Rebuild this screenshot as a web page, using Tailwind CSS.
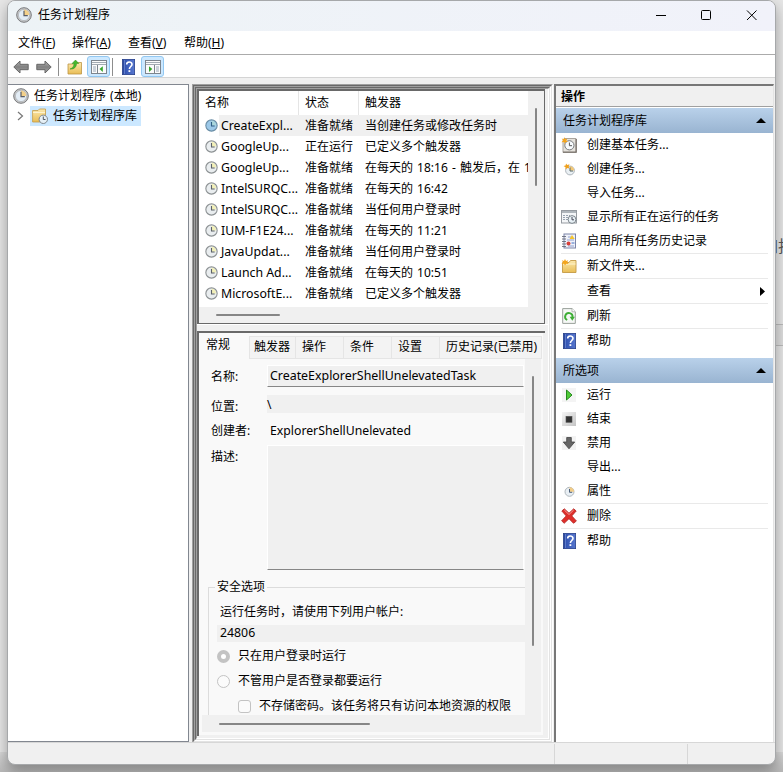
<!DOCTYPE html>
<html lang="zh-CN">
<head>
<meta charset="utf-8">
<title>任务计划程序</title>
<script src="https://cdn.jsdelivr.net/npm/@tailwindcss/browser@4"></script>
</head>
<body class="relative h-[772px] w-[783px] overflow-hidden bg-[#e6e6e6] font-['Noto_Sans','Noto_Sans_CJK_SC',sans-serif] text-[12px] leading-[16px] text-black">

<svg class="absolute size-0">
  <defs>
    <linearGradient id="gold" x1="0" y1="0" x2="0" y2="1"><stop offset="0" stop-color="#fbe9ae"/><stop offset="1" stop-color="#e9bd55"/></linearGradient>
    <linearGradient id="blue" x1="0" y1="0" x2="1" y2="0"><stop offset="0" stop-color="#2a4494"/><stop offset=".25" stop-color="#3556b4"/><stop offset="1" stop-color="#5878cf"/></linearGradient>
    <linearGradient id="grey" x1="0" y1="0" x2="0" y2="1"><stop offset="0" stop-color="#b5b5b5"/><stop offset=".5" stop-color="#808080"/><stop offset="1" stop-color="#a9a9a9"/></linearGradient>
    <linearGradient id="stopbg" x1="0" y1="0" x2="1" y2="1"><stop offset="0" stop-color="#f6f6f6"/><stop offset="1" stop-color="#c4c4c4"/></linearGradient>
    <symbol id="clock" viewBox="0 0 16 16"><circle cx="8" cy="8" r="7.300" fill="#c9c9c9" stroke="#77797c" stroke-width="1"/><circle cx="8" cy="8" r="5.600" fill="#e3edf6" stroke="#a5a8ab" stroke-width=".6"/><path d="M8 8V2.600A5.400 5.400 0 0 1 13.400 8z" fill="#f3d08a"/><path d="M8 3.800V8.600H11.800" fill="none" stroke="#5a5d65" stroke-width="1.200"/></symbol>
    <symbol id="task" viewBox="0 0 14 14"><circle cx="7" cy="7" r="6.100" fill="#e9edef" stroke="#8d9294" stroke-width="1.200"/><path d="M7 7V2A5 5 0 0 1 12 7z" fill="#f2f0b8"/><path d="M7 3.300V7.600H10.400" fill="none" stroke="#5c6269" stroke-width="1.200"/></symbol>
    <symbol id="tasksel" viewBox="0 0 14 14"><circle cx="7" cy="7" r="6.100" fill="#9cc8e8" stroke="#6b8ea6" stroke-width="1.200"/><path d="M7 7V2A5 5 0 0 1 12 7z" fill="#a9d6dc"/><path d="M7 3.300V7.600H10.400" fill="none" stroke="#2f5f86" stroke-width="1.200"/></symbol>
    <symbol id="back" viewBox="0 0 16 14"><path d="M.8 7 7 1V4.300H15.200V9.700H7V13z" fill="url(#grey)" stroke="#666" stroke-width="1"/></symbol>
    <symbol id="up" viewBox="0 0 16 16"><path d="M1 5H7L8.500 3.500H14.500V15H1z" fill="url(#gold)" stroke="#bd9645" stroke-width=".8"/><path d="M3 10C6.500 9 7 6 7 4.500H5L8.500 1 11.800 4.500H9.500C9.500 8 7 10.500 3 10z" fill="#46b82e" stroke="#298d1b" stroke-width=".5"/></symbol>
    <symbol id="paneL" viewBox="0 0 16 14"><rect x=".5" y=".5" width="15" height="13" fill="#fbfbfb" stroke="#7d858e"/><path d="M1 2.500H15M1 4.500H15" stroke="#a3abb3" stroke-width="1"/><path d="M6.500 5V13" stroke="#7d858e"/><path d="M2 7H5M2 9H5M2 11H5" stroke="#9aa8b8"/><path d="M11.800 6.200V12L8.500 9.100z" fill="#35a52a"/></symbol>
    <symbol id="paneR" viewBox="0 0 16 14"><rect x=".5" y=".5" width="15" height="13" fill="#fbfbfb" stroke="#7d858e"/><path d="M1 2.500H15M1 4.500H15" stroke="#a3abb3" stroke-width="1"/><path d="M9.500 5V13" stroke="#7d858e"/><path d="M11 7H14M11 9H14M11 11H14" stroke="#9aa8b8"/><path d="M4 6.200V12L7.300 9.100z" fill="#35a52a"/></symbol>
    <symbol id="help" viewBox="0 0 13 16"><rect x=".4" y=".4" width="12.200" height="15.200" fill="url(#blue)" stroke="#27408b" stroke-width=".8"/><path d="M2.500 1V15" stroke="#7e98dd" stroke-width=".6"/><path d="M4.700 5.400C4.700 2.300 10 2.300 10 5.300 10 7.500 7.400 7.500 7.400 10" fill="none" stroke="#fff" stroke-width="1.600"/><rect x="6.500" y="11.200" width="1.800" height="1.800" fill="#fff"/></symbol>
    <symbol id="library" viewBox="0 0 16 16"><path d="M.6 2.500H6L7.500 1H13.500V14H.6z" fill="url(#gold)" stroke="#c49a45" stroke-width=".8"/><path d="M1 4.500H13" stroke="#fdf3cf"/><circle cx="11.300" cy="11.300" r="4.200" fill="#e6f0f6" stroke="#7e868c"/><path d="M11.300 8.500V11.500H13.500" fill="none" stroke="#4b5560"/></symbol>
    <symbol id="newbasic" viewBox="0 0 16 16"><path d="M3 1.500H15V15.500H2V4z" fill="#e5e2dc" stroke="#aaa59f"/><path d="M15.200 2V15.200H2" fill="none" stroke="#7a736d" stroke-width="1.300"/><circle cx="8.400" cy="8.300" r="4.600" fill="#f8fbfd" stroke="#77797b"/><path d="M8.400 5.500V8.700H11" fill="none" stroke="#555"/><path d="M3.500 0 4.300 2.200 6.500 1.500 5.300 3.500 7 5 4.700 5 3.800 7 3 5 .5 5.200 2 3.500.7 1.600 2.900 2.200z" fill="#f4a51c"/></symbol>
    <symbol id="newtask" viewBox="0 0 16 16"><circle cx="9" cy="9.500" r="4.400" fill="#eaf0f4" stroke="#a4acb2" stroke-width=".9"/><path d="M9 9.500V5.300A4.200 4.200 0 0 1 13.200 9.500z" fill="#f4c876"/><path d="M9 6.500V10H12" fill="none" stroke="#566"/><path d="M5 2.500 6.300 4 8.500 3.200 7.600 5.500 8.500 7.500 6.200 7 4.500 8.500 4.500 6.300 2.500 5 4.600 4.600z" fill="#f0a01c"/></symbol>
    <symbol id="running" viewBox="0 0 16 14"><rect x=".5" y=".5" width="15" height="12.500" fill="#f4f6f8" stroke="#969ba1"/><path d="M1 2H15" stroke="#99a0a8" stroke-width="1.600"/><path d="M2 5.500H9M2 7.500H8M2 9.500H7" stroke="#98a3b0" stroke-dasharray="2 1"/><circle cx="11" cy="9.500" r="3.900" fill="#e8f1f6" stroke="#7d858c"/><path d="M11 7V9.800H13" fill="none" stroke="#445"/></symbol>
    <symbol id="history" viewBox="0 0 14 16"><rect x="2" y="1" width="11.500" height="14" fill="#eef1fa" stroke="#7c85a8"/><path d="M0 3.500H4M0 6H4M0 8.500H4M0 11H4M0 13.500H4" stroke="#686b78" stroke-width=".9"/><path d="M6 4H9M5 7H12M6 13H12" stroke="#91a0cd"/><path d="M10 2 12.700 6H7.500z" fill="#f4c52c"/><circle cx="6.500" cy="10.500" r="2" fill="#d8403a"/><path d="M9.500 10H12.500" stroke="#4570c0"/></symbol>
    <symbol id="newfolder" viewBox="0 0 16 14"><path d="M1.500 3.500H8L9.500 1.500H15V13.500H1.500z" fill="url(#gold)" stroke="#c49a45" stroke-width=".9"/><path d="M2 5H14.500" stroke="#fff4cf"/><path d="M4 0 5 2 7.300 1.200 6.200 3.300 7.500 5 5.200 4.700 4 6.500 3 4.700.5 5 2 3.200.8 1.300 3 2z" fill="#f4a51c"/></symbol>
    <symbol id="refresh" viewBox="0 0 14 16"><path d="M.7.6H10L13.300 3.800V15.400H.7z" fill="#f6f8f6" stroke="#99a09a"/><path d="M10 .6V3.800H13.300" fill="#fff" stroke="#99a09a" stroke-width=".7"/><path d="M5.200 12A3.700 3.700 0 1 1 10.500 9.200" fill="none" stroke="#3fae36" stroke-width="1.900"/><path d="M7.600 8.700H12.900L10.300 12.800z" fill="#3fae36"/></symbol>
    <symbol id="run" viewBox="0 0 14 14"><rect width="14" height="14" fill="#f4f4f4"/><path d="M4.500 2V12L10 7z" fill="#4fcb37" stroke="#24891c" stroke-width="1"/></symbol>
    <symbol id="stop" viewBox="0 0 14 14"><rect width="14" height="14" fill="url(#stopbg)"/><rect x="4" y="4.300" width="6" height="6" fill="#333" stroke="#555" stroke-width=".6"/></symbol>
    <symbol id="disable" viewBox="0 0 14 14"><rect width="14" height="14" fill="#f3f3f3"/><path d="M4.700 1.500H9.300V6H12.700L7 12.800 1.300 6H4.700z" fill="#666" stroke="#444" stroke-width=".8"/></symbol>
    <symbol id="props" viewBox="0 0 16 16"><circle cx="8.500" cy="8.800" r="4.500" fill="#e9eff4" stroke="#a8b0b6" stroke-width=".9"/><path d="M8.500 8.800V4.300A4.500 4.500 0 0 1 13 8.800z" fill="#f3cd87"/><path d="M8.500 6V9.300H11.200" fill="none" stroke="#4c6078"/></symbol>
    <symbol id="delete" viewBox="0 0 16 16"><path d="M3.300.8 8 5.200 12.700.8 15.200 3 10.800 7.900 15.400 13 12.500 15.300 8 10.700 3.200 15.300.6 12.800 5.200 7.900.8 3z" fill="#df2f2b" stroke="#b02522" stroke-width=".8"/><path d="M3.300 2 8 6.500 12.700 2" fill="none" stroke="#f39a94" stroke-width="1"/></symbol>
  </defs>
</svg>

<!-- Desktop behind the window -->
<div class="absolute inset-x-0 bottom-0 h-[20px] bg-linear-to-b from-[#d8d8d8] to-[#b8b8b8]"></div>
<div class="absolute top-0 left-[152px] h-px w-[224px] bg-[#777]"></div>
<div class="absolute top-[324px] left-[774px] h-[22px] w-[9px] border-y border-[#bbb] bg-[#dedede]"></div>
<div class="absolute top-[236px] left-[762px] text-[16px] leading-[20px] whitespace-nowrap text-[#555]">加抖</div>

<main class="absolute top-0 left-[7px] flex h-[765px] w-[769px] flex-col overflow-hidden rounded-[8px] border border-[#a6a8aa] bg-[#f0f0f0] shadow-[0_6px_14px_rgba(0,0,0,0.32)]">
  <header class="flex h-[30px] shrink-0 items-center bg-linear-to-r from-[#edf3f6] to-[#f1f2fa] pb-[2px] pl-[8px]">
    <svg class="size-[16px]"><use href="#clock"/></svg>
    <span class="ml-[6px] flex-1">任务计划程序</span>
    <svg class="mr-[16px] h-[12px] w-[104px]" viewBox="0 0 104 12" fill="none" stroke="#000"><path d="M1 6.500H11"/><rect x="46.500" y="1.500" width="9" height="9" rx="1"/><path d="M92 1.500 101.500 11M101.500 1.500 92 11"/></svg>
  </header>
  <nav class="flex h-[24px] shrink-0 items-center border-b border-[#ababab] bg-white pt-[1px] pl-[10px]">
    <span class="w-[54px]">文件(<u>F</u>)</span><span class="w-[56px]">操作(<u>A</u>)</span><span class="w-[56px]">查看(<u>V</u>)</span><span>帮助(<u>H</u>)</span>
  </nav>
  <div class="flex h-[23px] shrink-0 items-center border-b border-[#d4d4d4] bg-white pt-[1px] pl-[5px]">
    <svg class="h-[14px] w-[16px]"><use href="#back"/></svg>
    <svg class="ml-[7px] h-[14px] w-[16px] -scale-x-100"><use href="#back"/></svg>
    <span class="ml-[6px] h-[18px] w-px bg-[#8d8d8d]"></span>
    <svg class="ml-[8px] size-[16px]"><use href="#up"/></svg>
    <span class="ml-[4px] flex h-[21px] w-[23px] items-center justify-center rounded-[3px] border border-[#92c8f2] bg-[#cce8ff]"><svg class="h-[14px] w-[16px]"><use href="#paneL"/></svg></span>
    <span class="ml-[2px] h-[18px] w-px bg-[#8d8d8d]"></span>
    <svg class="ml-[9px] h-[16px] w-[13px]"><use href="#help"/></svg>
    <span class="ml-[6px] flex h-[21px] w-[23px] items-center justify-center rounded-[3px] border border-[#92c8f2] bg-[#cce8ff]"><svg class="h-[14px] w-[16px]"><use href="#paneR"/></svg></span>
  </div>

  <div class="flex h-[664px] shrink-0 pt-[6px]">
    <!-- Console tree -->
    <aside class="h-[658px] w-[181px] shrink-0 border border-l-0 border-[#828790] bg-white pt-[1px]">
      <div class="flex h-[20px] items-center pl-[5px]"><svg class="size-[16px]"><use href="#clock"/></svg><span class="ml-[5px] [word-spacing:1px]">任务计划程序 (本地)</span></div>
      <div class="flex h-[20px] items-center pl-[9px]">
        <svg class="h-[10px] w-[7px]" viewBox="0 0 7 10" fill="none" stroke="#777" stroke-width="1.200"><path d="M1 1 5.500 5 1 9"/></svg>
        <span class="ml-[6px] flex h-[20px] w-[111px] items-center bg-[#cce8ff] pl-[2px]"><svg class="size-[16px]"><use href="#library"/></svg><span class="ml-[5px]">任务计划程序库</span></span>
      </div>
    </aside>

    <!-- Result pane with ridged frame -->
    <section class="ml-[3px] flex h-[659px] w-[361px] shrink-0 border border-t-[#a0a0a0] border-r-white border-b-white border-l-[#a0a0a0]">
      <div class="flex flex-1 border border-t-[#696969] border-r-[#e3e3e3] border-b-[#e3e3e3] border-l-[#696969]">
      <div class="flex flex-1 border border-t-[#a0a0a0] border-r-white border-b-white border-l-[#a0a0a0]">
      <div class="flex flex-1 border border-t-[#696969] border-r-[#e3e3e3] border-b-[#e3e3e3] border-l-[#696969]">
      <div class="flex flex-1 flex-col border border-t-[#a0a0a0] border-r-white border-b-white border-l-[#a0a0a0]">
        <div class="h-[235px] w-[348px] shrink-0 border-t-2 border-r border-b border-l-2 border-[#696969]">
          <div class="flex h-full bg-[#f0f0f0]">
            <div class="w-[329px]">
              <div class="h-[216px] overflow-hidden bg-white">
                <div class="flex h-[24px] leading-[24px]"><span class="w-[100px] border-r border-[#e5e5e5] pl-[6px]">名称</span><span class="w-[60px] border-r border-[#e5e5e5] pl-[6px]">状态</span><span class="pl-[6px]">触发器</span></div>
                <div id="tasks"></div>
              </div>
              <div class="mt-[7px] ml-[17px] h-[2px] w-[64px] rounded bg-[#868686]"></div>
            </div>
            <div class="mt-[17px] ml-[7px] h-[78px] w-[2px] rounded bg-[#868686]"></div>
          </div>
        </div>
        <div class="h-[7px] shrink-0 border-t border-white"></div>
        <div class="flex h-[405px] w-[348px] shrink-0 border-t-2 border-l-2 border-[#696969] bg-[#f0f0f0]">
          <div class="flex h-[402px] w-[344px] flex-col bg-[#f9f9f9]">
            <div class="flex h-[26px] shrink-0 items-end">
              <span class="h-[26px] w-[50px] pt-[4px] pl-[7px]">常规</span>
              <span class="h-[23px] w-[47px] border border-[#e5e5e5] bg-[#f3f3f3] pt-[2px] pl-[4px]">触发器</span>
              <span class="h-[23px] w-[48px] border border-l-0 border-[#e5e5e5] bg-[#f3f3f3] pt-[2px] pl-[6px]">操作</span>
              <span class="h-[23px] w-[48px] border border-l-0 border-[#e5e5e5] bg-[#f3f3f3] pt-[2px] pl-[6px]">条件</span>
              <span class="h-[23px] w-[48px] border border-l-0 border-[#e5e5e5] bg-[#f3f3f3] pt-[2px] pl-[6px]">设置</span>
              <span class="h-[23px] w-[102px] border border-l-0 border-[#e5e5e5] bg-[#f3f3f3] pt-[2px] pl-[6px] whitespace-nowrap">历史记录(已禁用)</span>
            </div>
            <div class="flex h-[356px] shrink-0">
              <div class="w-[326px] overflow-hidden">
                <div class="grid grid-cols-[56px_257px] pl-[12px]">
                  <span class="h-[35px] pt-[10px]">名称:</span>
                  <span class="mt-[6px] h-[22px] border border-white border-b-[#868686] bg-[#f0f0f0] pt-[2px] pl-[2px] text-[12.400px]">CreateExplorerShellUnelevatedTask</span>
                  <span class="h-[26px] pt-[5px]">位置:</span>
                  <span class="mt-[1px] h-[18px] bg-[#f0f0f0] pt-[2px]">\</span>
                  <span class="h-[25px] pt-[3px]">创建者:</span>
                  <span class="pt-[3px] pl-[3px] text-[12.250px]">ExplorerShellUnelevated</span>
                  <span class="h-[125px] pt-[4px]">描述:</span>
                  <span class="h-[125px] border border-white border-b-[#868686] bg-[#f0f0f0]"></span>
                </div>
                <fieldset class="mt-[9px] ml-[9px] h-[150px] w-[330px] border border-[#dcdcdc]">
                  <legend class="ml-[6px] h-[16px] px-[2px]">安全选项</legend>
                  <div class="-mt-[1px] pl-[8px]">
                    <div class="pt-[10px] pl-[3px]">运行任务时，请使用下列用户帐户:</div>
                    <div class="mt-[5px] h-[17px] bg-[#f0f0f0] pl-[3px] text-[12.300px]">24806</div>
                    <div class="mt-[6px] flex h-[16px] items-center"><span class="size-[13px] rounded-full border-4 border-[#c3c3c3] bg-white"></span><span class="ml-[8px]">只在用户登录时运行</span></div>
                    <div class="mt-[9px] flex h-[16px] items-center"><span class="size-[13px] rounded-full border border-[#c3c3c3] bg-[#fbfbfb]"></span><span class="ml-[8px]">不管用户是否登录都要运行</span></div>
                    <div class="mt-[9px] flex h-[16px] items-center pl-[21px]"><span class="size-[13px] rounded-[3px] border border-[#c3c3c3] bg-[#fbfbfb]"></span><span class="ml-[8px] whitespace-nowrap">不存储密码。该任务将只有访问本地资源的权限</span></div>
                  </div>
                </fieldset>
              </div>
              <div class="w-[16px] bg-[#f0f0f0] pt-[17px] pl-[7px]"><div class="h-[270px] w-[2px] rounded bg-[#868686]"></div></div>
            </div>
            <div class="ml-[3px] h-[17px] w-[339px] bg-[#f0f0f0] pt-[8px] pl-[17px]"><div class="h-[2px] w-[151px] rounded bg-[#868686]"></div></div>
          </div>
        </div>
      </div></div></div></div>
    </section>

    <!-- Actions -->
    <aside class="ml-[1px] h-[658px] w-[220px] shrink-0 border-t-2 border-r border-l-2 border-t-[#777] border-r-[#e3e3e3] border-l-[#777] bg-white">
      <h2 class="h-[21px] border-b border-[#a0a0a0] bg-[#f0f0f0] pt-[3px] pl-[5px] font-bold">操作</h2>
      <div id="actions" class="pt-[1px]"></div>
    </aside>
  </div>

  <footer class="flex h-[22px] shrink-0 border-t border-[#d7d7d7]">
    <span class="mt-[1px] w-[547px] border-r border-[#d7d7d7]"></span><span class="mt-[1px] w-[133px] border-r border-[#d7d7d7]"></span>
  </footer>
</main>

<script>
const tasks = [
  ['CreateExpl...', '准备就绪', '当创建任务或修改任务时'],
  ['GoogleUp...', '正在运行', '已定义多个触发器'],
  ['GoogleUp...', '准备就绪', '在每天的 18:16 - 触发后，在 1'],
  ['IntelSURQC...', '准备就绪', '在每天的 16:42'],
  ['IntelSURQC...', '准备就绪', '当任何用户登录时'],
  ['IUM-F1E24...', '准备就绪', '在每天的 11:21'],
  ['JavaUpdat...', '准备就绪', '当任何用户登录时'],
  ['Launch Ad...', '准备就绪', '在每天的 10:51'],
  ['MicrosoftE...', '准备就绪', '已定义多个触发器']
];
document.getElementById('tasks').innerHTML = tasks.map(([name, state, trigger], i) => `
  <div class="flex h-[21px] items-center pl-[6px]">
    <svg class="size-[13px] shrink-0"><use href="#${i ? 'task' : 'tasksel'}"/></svg>
    <div class="${i ? 'ml-px flex h-[21px] w-[309px] items-center overflow-hidden whitespace-nowrap' : 'ml-px flex h-[21px] w-[309px] items-center overflow-hidden bg-[#f0f0f0] whitespace-nowrap'}">
      <span class="w-[86px] shrink-0 pl-[2px] text-[12.300px]">${name}</span><span class="w-[60px] shrink-0">${state}</span><span class="[word-spacing:1px]">${trigger}</span>
    </div>
  </div>`).join('');

const help = ['help', '帮助', 'h-[16px] w-[13px]'];
const groups = [
  ['任务计划程序库', [['newbasic', '创建基本任务...', 'size-[16px]'], ['newtask', '创建任务...', 'size-[16px]'], ['', '导入任务...', 'size-[16px]'], ['running', '显示所有正在运行的任务', 'h-[14px] w-[16px]'], ['history', '启用所有任务历史记录', 'h-[16px] w-[14px]'], null, ['newfolder', '新文件夹...', 'h-[14px] w-[16px]'], null, ['', '查看', 'size-[16px]', true], null, ['refresh', '刷新', 'h-[16px] w-[14px]'], null, help]],
  ['所选项', [['run', '运行', 'size-[14px]'], ['stop', '结束', 'size-[14px]'], ['disable', '禁用', 'size-[14px]'], ['', '导出...', 'size-[16px]'], ['props', '属性', 'size-[16px]'], null, ['delete', '删除', 'size-[16px]'], null, help]]
];
document.getElementById('actions').innerHTML = groups.map(([title, items]) => `
  <div class="mb-[5px]">
    <div class="flex h-[25px] items-center justify-between bg-linear-to-b from-[#b9d1ea] to-[#99b4d1] pr-[7px] pl-[7px]"><span>${title}</span><svg class="h-[5px] w-[10px]" viewBox="0 0 10 5"><path d="M5 0 10 5H0z"/></svg></div>
    ${items.map(it => it ? `<div class="flex h-[24px] items-center pl-[5px]"><span class="flex w-[16px] justify-center"><svg class="${it[2]}"><use href="#${it[0]}"/></svg></span><span class="ml-[10px] flex-1">${it[1]}</span>${it[3] ? '<svg class="mr-[8px] h-[9px] w-[5px]" viewBox="0 0 5 9"><path d="M0 0 5 4.500 0 9z"/></svg>' : ''}</div>` : '<div class="mx-[5px] h-px bg-[#e9e9e9]"></div>').join('')}
  </div>`).join('');
</script>
</body>
</html>
